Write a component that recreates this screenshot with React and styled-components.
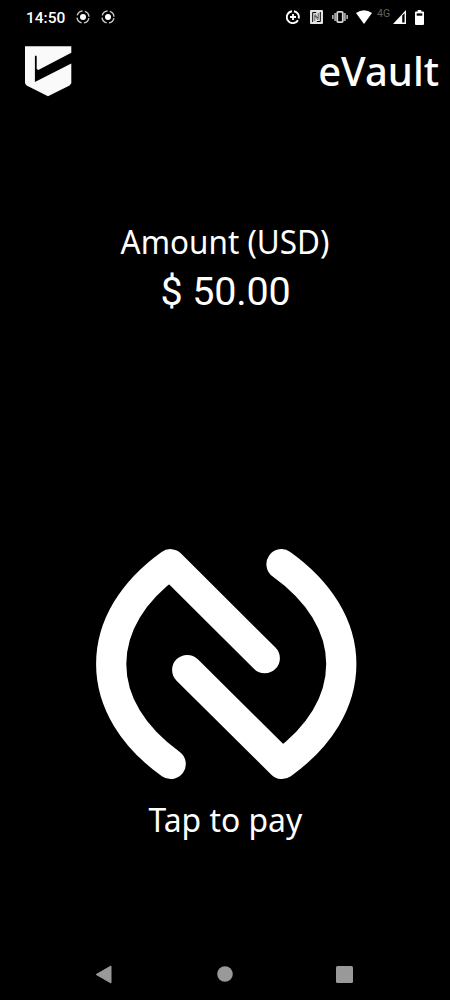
import React from "react";
import styled, { createGlobalStyle } from "styled-components";

const GlobalStyle = createGlobalStyle`
  html, body { margin: 0; background: #000; }
`;

const Screen = styled.main`
  width: 450px;
  height: 1000px;
  display: flex;
  flex-direction: column;
  background: #000;
  color: #fff;
  overflow: hidden;
`;

const StatusBar = styled.header`
  height: 34px;
  flex: none;
  display: flex;
  justify-content: space-between;
  box-sizing: border-box;
  padding: 0 26px 0 26px;
`;

const StatusGroup = styled.div`
  display: flex;
  align-items: center;
`;

const Clock = styled.time`
  font: 500 15.5px/34px Roboto, sans-serif;
  width: 50px;
  padding-top: 1px;
  white-space: nowrap;
`;

const NetworkLabel = styled.span`
  font: 400 10.5px/12px Roboto, sans-serif;
  color: #606060;
  margin: 0 2px 7px 5px;
  width: 14px;
  white-space: nowrap;
`;

const Glyph = styled.svg`
  display: block;
  flex: none;
  margin-left: ${(p) => p.$gap || 0}px;
`;

const BrandBar = styled.div`
  height: 66px;
  flex: none;
  display: flex;
  justify-content: space-between;
  align-items: flex-start;
  box-sizing: border-box;
  padding: 12px 11px 0 25px;
`;

const BrandName = styled.h1`
  margin: 0;
  font: 500 40px/50px "Noto Sans", sans-serif;
`;

const Amount = styled.section`
  height: 448px;
  flex: none;
  box-sizing: border-box;
  padding-top: 120px;
  display: flex;
  flex-direction: column;
  align-items: center;
`;

const Label = styled.p`
  margin: 0;
  font: 400 ${(p) => p.$size}px/44px "Noto Sans", sans-serif;
  transform: scaleX(${(p) => p.$stretch});
`;

const Value = styled.p`
  margin: 4px 0 0;
  padding-left: 1px;
  font: 400 39.5px/48px Roboto, sans-serif;
  letter-spacing: -0.2px;
`;

const TapArea = styled.section`
  height: 400px;
  flex: none;
  display: flex;
  flex-direction: column;
  align-items: center;
  gap: 18px;
`;

const NavBar = styled.nav`
  height: 52px;
  flex: none;
  display: flex;
  justify-content: space-between;
  align-items: center;
  box-sizing: border-box;
  padding: 0 97px 0 95px;
`;

const CastDot = ({ gap }) => (
  <Glyph $gap={gap} width="14" height="14" viewBox="0 0 14 14">
    <circle cx="7" cy="7" r="3" fill="#fff" />
    <circle cx="7" cy="7" r="6" fill="none" stroke="#c8c8c8" strokeWidth="1.4" strokeDasharray="7 2.425" strokeDashoffset="-1.21" />
  </Glyph>
);

export default function App() {
  return (
    <>
      <GlobalStyle />
      <Screen>
        <StatusBar>
          <StatusGroup>
            <Clock>14:50</Clock>
            <CastDot gap={0} />
            <CastDot gap={11} />
          </StatusGroup>
          <StatusGroup>
            <Glyph width="14" height="14" viewBox="0 0 14 14">
              <path d="M6 1.2A6 6 0 1 0 12 10.2M8 1.2A6 6 0 0 1 12.7 8.5" fill="none" stroke="#fff" strokeWidth="1.9" />
              <path d="M7 4v6M4 7h6" stroke="#fff" strokeWidth="1.8" />
            </Glyph>
            <Glyph $gap={10} width="13" height="14" viewBox="0 0 13 14">
              <rect width="13" height="14" rx="1" fill="#e4e4e4" />
              <path d="M2.7 12V2.5M2.7 2.5L6.2 2.5M10.3 2V11.5M10.3 11.5H6.8" fill="none" stroke="#000" strokeWidth="1" />
              <path d="M4.8 11V5.5L8.2 10M8.2 3V8.5L4.8 4" fill="none" stroke="#222" strokeWidth=".7" />
            </Glyph>
            <Glyph $gap={9} width="16" height="12" viewBox="0 0 16 12">
              <path d="M.8 4v4M3.1 2v8M12.9 2v8M15.2 4v4" stroke="#aaa" strokeWidth="1.7" />
              <rect x="5.2" y=".9" width="5.6" height="10.2" rx="1" fill="#000" stroke="#d5d5d5" strokeWidth="1.8" />
            </Glyph>
            <Glyph $gap={8} width="16" height="14" viewBox="0 0 16 14">
              <path d="M0 3Q8-2.6 16 3L8 14Z" fill="#fff" />
            </Glyph>
            <NetworkLabel>4G</NetworkLabel>
            <Glyph width="13" height="14" viewBox="0 0 13 14">
              <path d="M13 0V14H0Z" fill="#fff" />
              <path d="M9.2 5.6L11.6 3.2V12.6H9.2Z" fill="#000" />
            </Glyph>
            <Glyph $gap={9} width="9" height="15" viewBox="0 0 9 15">
              <path d="M2.7 0h3.6v1.5H8q1 0 1 1V14q0 1-1 1H1q-1 0-1-1V2.5q0-1 1-1h1.7Z" fill="#fff" />
              <rect x="1.7" y="3.4" width="5.6" height="2.3" fill="#000" />
            </Glyph>
          </StatusGroup>
        </StatusBar>

        <BrandBar>
          <Glyph width="47" height="51" viewBox="0 0 47 51">
            <path d="M0 .3H46.3V6.8L13.3 23.9L11.7 23V10.5Q10.8 8.6 9.9 10.5V36L46.3 17.6V37.2L44.6 39.5L23 50.3L1.6 39.5L0 37.2Z" fill="#fafafa" />
          </Glyph>
          <BrandName>eVault</BrandName>
        </BrandBar>

        <Amount>
          <Label $size={32.5} $stretch={0.967}>Amount (USD)</Label>
          <Value>$ 50.00</Value>
        </Amount>

        <TapArea>
          <Glyph $gap={2} width="262" height="232" viewBox="95 548 262 232">
            <g fill="none" stroke="#fff" strokeWidth="30.2" strokeLinecap="round" strokeLinejoin="round">
              <path d="M170.7 764C133 737 111.2 702 111.2 664S133 591 170.4 564.2L264.8 658.2" />
              <path d="M281.5 564.2C319 591 341.3 626 341.3 664S319.5 737 282 764L187.2 670" />
            </g>
          </Glyph>
          <Label $size={32.5} $stretch={0.98}>Tap to pay</Label>
        </TapArea>

        <NavBar>
          <Glyph width="17" height="19" viewBox="0 0 17 19">
            <path d="M16 1V18L1.2 9.5Z" fill="#999" stroke="#999" strokeLinejoin="round" />
          </Glyph>
          <Glyph $gap={2} width="16" height="16" viewBox="0 0 16 16">
            <circle cx="8" cy="8" r="7.8" fill="#999" />
          </Glyph>
          <Glyph width="17" height="17" viewBox="0 0 17 17">
            <rect width="17" height="17" rx="1.5" fill="#999" />
          </Glyph>
        </NavBar>
      </Screen>
    </>
  );
}
